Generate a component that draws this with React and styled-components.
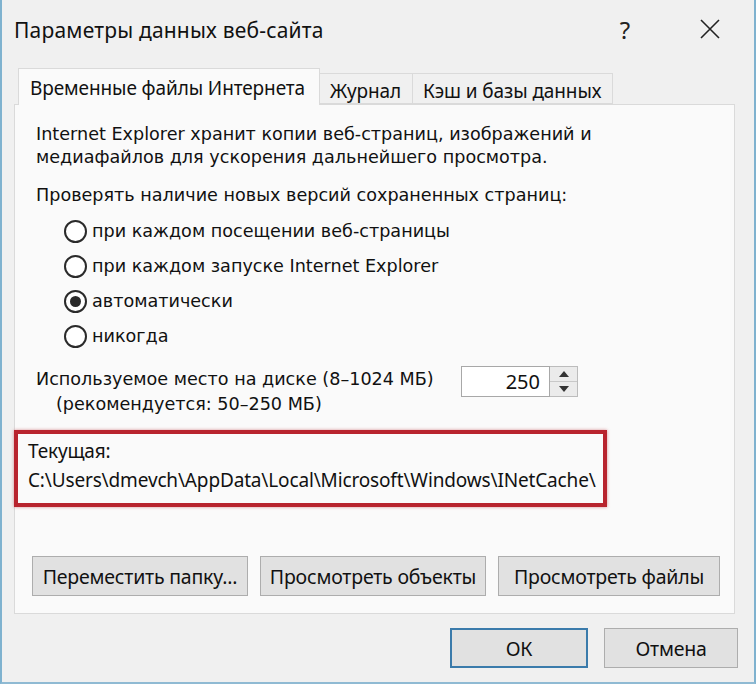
import React from "react";
import styled, { createGlobalStyle } from "styled-components";

const GlobalStyle = createGlobalStyle`
  html, body { margin: 0; padding: 0; background: #f0f0f0; }
  * { box-sizing: border-box; }
`;

const UI = `"Noto Sans", "Open Sans", sans-serif`;
const CLASSIC = `"DejaVu Sans", Verdana, sans-serif`;

const Window = styled.div`
  width: 756px;
  height: 684px;
  background: #f0f0f0;
  border-left: 2px solid #7fb2cf;
  border-right: 2px solid #7fb2cf;
  border-bottom: 2px solid #8fbad3;
  display: flex;
  flex-direction: column;
  font-family: ${UI};
  color: #111;
  overflow: hidden;
`;

const TitleBar = styled.div`
  height: 58px;
  display: flex;
  align-items: center;
  padding: 0 14px 0 12px;
`;

const Title = styled.div`
  flex: 1;
  font-size: 21px;
  letter-spacing: 0.2px;
  padding-top: 2px;
`;

const TitleButton = styled.div`
  width: 60px;
  margin-left: ${(p) => p.$gap || 0}px;
  display: flex;
  justify-content: center;
  align-items: center;
  font-size: 24px;
  color: #222;
`;

const Body = styled.div`
  padding: 10px 19px 0 12px;
  display: flex;
  flex-direction: column;
`;

const TabRow = styled.div`
  display: flex;
  align-items: flex-end;
  padding-left: 4px;
  height: 36px;
  position: relative;
  z-index: 1;
`;

const Tab = styled.div`
  font-size: 19px;
  letter-spacing: -0.1px;
  height: ${(p) => (p.$active ? "37px" : "31px")};
  margin-bottom: ${(p) => (p.$active ? "-1px" : "0")};
  padding: ${(p) => (p.$active ? "6px 14px 0 11px" : "4px 11px 0 10px")};
  background: ${(p) => (p.$active ? "#fafafa" : "#f0f0f0")};
  border: 1px solid #dadada;
  border-bottom: ${(p) => (p.$active ? "none" : "1px solid #dadada")};
  border-left: ${(p) => (p.$first ? "1px solid #dadada" : "none")};
  white-space: nowrap;
`;

const Panel = styled.div`
  height: 510px;
  background: #fafafa;
  border: 1px solid #dadada;
  padding: 18px 0 0 21px;
  display: flex;
  flex-direction: column;
  font-family: ${CLASSIC};
  font-size: 17.6px;
`;

const Para = styled.div`
  line-height: ${(p) => p.$lh || 23}px;
  margin-bottom: ${(p) => p.$mb || 0}px;
  padding-left: ${(p) => p.$indent || 0}px;
  white-space: nowrap;
`;

const RadioGroup = styled.div`
  display: flex;
  flex-direction: column;
  padding-left: 28px;
  margin-top: 12px;
  gap: 11px;
`;

const RadioRow = styled.div`
  display: flex;
  align-items: center;
  height: 24px;
  gap: 5px;
`;

const RadioCircle = styled.span`
  width: 23px;
  height: 23px;
  flex: none;
  border-radius: 50%;
  border: 2px solid #2a2a2a;
  background: #fff;
  display: flex;
  align-items: center;
  justify-content: center;
  &::after {
    content: "";
    width: 11px;
    height: 11px;
    border-radius: 50%;
    background: ${(p) => (p.$checked ? "#2a2a2a" : "transparent")};
  }
`;

const DiskRow = styled.div`
  display: flex;
  align-items: flex-start;
  margin-top: 19px;
`;

const DiskText = styled.div`
  width: 425px;
`;

const Spinner = styled.div`
  display: flex;
  height: 31px;
  margin-top: -1px;
`;

const SpinInput = styled.div`
  width: 89px;
  height: 31px;
  border: 1px solid #a8a8a8;
  background: #fff;
  font-family: ${UI};
  font-size: 20px;
  text-align: right;
  padding: 0 9px 0 0;
  line-height: 29px;
`;

const SpinButtons = styled.div`
  width: 28px;
  display: flex;
  flex-direction: column;
  border: 1px solid #bcbcbc;
  border-left: none;
`;

const SpinBtn = styled.div`
  flex: 1;
  background: #ebebeb;
  display: flex;
  align-items: center;
  justify-content: center;
  & + & { border-top: 1px solid #c8c8c8; }
`;

const Highlight = styled.div`
  margin: 13px 0 0 -22px;
  width: 593px;
  height: 77px;
  border: 4px solid #b8242e;
  box-shadow: 0 0 3px rgba(184, 36, 46, 0.5);
  padding: 3px 0 0 10px;
  font-family: ${UI};
  font-size: 19px;
  letter-spacing: -0.15px;
  line-height: 29px;
  white-space: nowrap;
`;

const ButtonRow = styled.div`
  display: flex;
  gap: 12px;
  margin-top: 49px;
  margin-left: -4px;
`;

const Button = styled.div`
  width: ${(p) => p.$w}px;
  height: 40px;
  background: #e1e1e1;
  border: ${(p) => (p.$default ? "2px solid #3b7bab" : "1px solid #adadad")};
  display: flex;
  align-items: center;
  justify-content: center;
  font-family: ${UI};
  font-size: 19.5px;
  letter-spacing: -0.2px;
  color: #111;
  white-space: nowrap;
`;

const Footer = styled.div`
  display: flex;
  justify-content: flex-end;
  gap: 16px;
  padding-top: 14px;
  margin-right: -3px;
`;

const Arrow = ({ up }) => (
  <svg width="10" height="6" viewBox="0 0 10 6">
    <path d={up ? "M0 6 L5 0 L10 6 Z" : "M0 0 L5 6 L10 0 Z"} fill="#333" />
  </svg>
);

const radios = [
  { label: "при каждом посещении веб-страницы" },
  { label: "при каждом запуске Internet Explorer" },
  { label: "автоматически", checked: true },
  { label: "никогда" },
];

export default function App() {
  return (
    <>
      <GlobalStyle />
      <Window>
        <TitleBar>
          <Title>Параметры данных веб-сайта</Title>
          <TitleButton>?</TitleButton>
          <TitleButton $gap={25}>
            <svg width="20" height="20" viewBox="0 0 20 20">
              <path d="M1 1 L19 19 M19 1 L1 19" stroke="#222" strokeWidth="1.6" />
            </svg>
          </TitleButton>
        </TitleBar>
        <Body>
          <TabRow>
            <Tab $active $first>Временные файлы Интернета</Tab>
            <Tab>Журнал</Tab>
            <Tab>Кэш и базы данных</Tab>
          </TabRow>
          <Panel>
            <Para $mb={15}>
              Internet Explorer хранит копии веб-страниц, изображений и
              <br />
              медиафайлов для ускорения дальнейшего просмотра.
            </Para>
            <Para>Проверять наличие новых версий сохраненных страниц:</Para>
            <RadioGroup>
              {radios.map((r) => (
                <RadioRow key={r.label}>
                  <RadioCircle $checked={r.checked} />
                  <span>{r.label}</span>
                </RadioRow>
              ))}
            </RadioGroup>
            <DiskRow>
              <DiskText>
                <Para $lh={25}>Используемое место на диске (8–1024 МБ)</Para>
                <Para $lh={25} $indent={20}>(рекомендуется: 50–250 МБ)</Para>
              </DiskText>
              <Spinner>
                <SpinInput>250</SpinInput>
                <SpinButtons>
                  <SpinBtn><Arrow up /></SpinBtn>
                  <SpinBtn><Arrow /></SpinBtn>
                </SpinButtons>
              </Spinner>
            </DiskRow>
            <Highlight>
              <div>Текущая:</div>
              <div>C:\Users\dmevch\AppData\Local\Microsoft\Windows\INetCache\</div>
            </Highlight>
            <ButtonRow>
              <Button $w={216}>Переместить папку...</Button>
              <Button $w={226}>Просмотреть объекты</Button>
              <Button $w={222}>Просмотреть файлы</Button>
            </ButtonRow>
          </Panel>
          <Footer>
            <Button $w={138} $default>ОК</Button>
            <Button $w={134}>Отмена</Button>
          </Footer>
        </Body>
      </Window>
    </>
  );
}
